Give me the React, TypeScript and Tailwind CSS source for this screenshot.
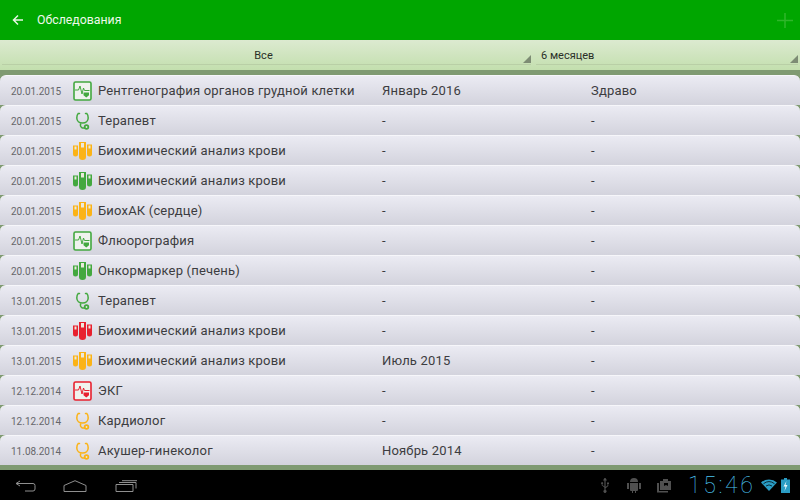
import type { ReactNode } from "react";

type Tone = "green" | "amber" | "red";
type Kind = "monitor" | "scope" | "tubes";

type Row = { date: string; kind: Kind; tone: Tone; name: string; when: string; status: string };

const rows: Row[] = [
  { date: "20.01.2015", kind: "monitor", tone: "green", name: "Рентгенография органов грудной клетки", when: "Январь 2016", status: "Здраво" },
  { date: "20.01.2015", kind: "scope", tone: "green", name: "Терапевт", when: "-", status: "-" },
  { date: "20.01.2015", kind: "tubes", tone: "amber", name: "Биохимический анализ крови", when: "-", status: "-" },
  { date: "20.01.2015", kind: "tubes", tone: "green", name: "Биохимический анализ крови", when: "-", status: "-" },
  { date: "20.01.2015", kind: "tubes", tone: "amber", name: "БиохАК (сердце)", when: "-", status: "-" },
  { date: "20.01.2015", kind: "monitor", tone: "green", name: "Флюорография", when: "-", status: "-" },
  { date: "20.01.2015", kind: "tubes", tone: "green", name: "Онкормаркер (печень)", when: "-", status: "-" },
  { date: "13.01.2015", kind: "scope", tone: "green", name: "Терапевт", when: "-", status: "-" },
  { date: "13.01.2015", kind: "tubes", tone: "red", name: "Биохимический анализ крови", when: "-", status: "-" },
  { date: "13.01.2015", kind: "tubes", tone: "amber", name: "Биохимический анализ крови", when: "Июль 2015", status: "-" },
  { date: "12.12.2014", kind: "monitor", tone: "red", name: "ЭКГ", when: "-", status: "-" },
  { date: "12.12.2014", kind: "scope", tone: "amber", name: "Кардиолог", when: "-", status: "-" },
  { date: "11.08.2014", kind: "scope", tone: "amber", name: "Акушер-гинеколог", when: "Ноябрь 2014", status: "-" },
];

const colors: Record<Tone, string> = { green: "#43a83f", amber: "#fbb316", red: "#e8202e" };

function RowIcon({ kind, tone }: { kind: Kind; tone: Tone }) {
  const c = colors[tone];
  if (kind === "monitor") {
    return (
      <svg width="19" height="20" viewBox="0 0 19 20">
        <rect x="1" y="1" width="17" height="18" rx="1.5" fill="#f0f3ee" stroke={c} strokeWidth="1.6" />
        <path d="M2 9h3.500l1.500-4 2 8 1.500-6 1 2.500h5" fill="none" stroke={c} strokeWidth="1" />
        <path d="M10.500 11.500h5.500v2.800l-2.750 2.200-2.750-2.200z" fill={c} />
      </svg>
    );
  }
  if (kind === "scope") {
    return (
      <svg width="18" height="22" viewBox="0 0 18 22">
        <path d="M6.500 3.500H5.200C4 4.700 3.800 6.500 3.800 8c0 3 2.400 5 5.700 5s5.700-2 5.700-5c0-1.500-.2-3.300-1.400-4.500H12.500" fill="none" stroke={c} strokeWidth="1.500" strokeLinecap="round" />
        <path d="M8 13.500c-1.200 1.500-.5 3.500 1 4.200 1 .4 2 .2 3 0" fill="none" stroke={c} strokeWidth="1.500" />
        <circle cx="13.500" cy="17" r="2.700" fill={c} />
        <circle cx="13.500" cy="17" r="0.900" fill="#e4e4ea" />
      </svg>
    );
  }
  return (
    <svg width="19" height="18" viewBox="0 0 19 18">
      <path d="M0 3.500h5v8.500a2.500 2.500 0 0 1-5 0z" fill={c} />
      <path d="M6 0h7v15a3.500 3 0 0 1-7 0z" fill={c} />
      <path d="M14 2.500h5v9.500a2.500 2.500 0 0 1-5 0z" fill={c} />
      <rect x="1.500" y="4.500" width="2" height="3" fill="#ece9dc" />
      <rect x="8" y="1" width="3" height="4.500" fill="#ece9dc" />
      <rect x="15.500" y="3.500" width="2" height="3" fill="#ece9dc" />
    </svg>
  );
}

function Spinner({ className, children }: { className: string; children: ReactNode }) {
  return (
    <div className={`relative flex h-[25px] items-end border-b border-[#b9cfa6] ${className}`}>
      {children}
      <span className="absolute right-0 bottom-[1px] h-0 w-0 border-b-[8px] border-l-[8px] border-b-[#7d8c74] border-l-transparent" />
    </div>
  );
}

export default function App() {
  return (
    <div className="flex h-[500px] w-[800px] flex-col overflow-hidden bg-[#7f9a72] font-['Roboto',sans-serif]">
      <header className="flex h-[40px] shrink-0 items-center justify-between bg-[#00a600] pr-[7px] pl-[12px] shadow-[0_1px_2px_rgba(0,0,0,0.45)]">
        <div className="flex items-center">
          <svg width="12" height="12" viewBox="0 0 12 12">
            <path d="M11 6H2M6 1.500 1.500 6 6 10.500" fill="none" stroke="#e8f6e4" strokeWidth="1.500" />
          </svg>
          <span className="mt-[1px] ml-[13px] text-[12.300px] text-[#eef8ea]">Обследования</span>
        </div>
        <svg width="16" height="15" viewBox="0 0 16 15">
          <path d="M8 0v15M0 7.500h16" stroke="#2fb62a" strokeWidth="1.500" />
        </svg>
      </header>

      <div className="flex h-[30px] shrink-0 items-start gap-[5px] bg-gradient-to-b from-[#dcead0] to-[#c3dfae] px-[2px] text-[11px] text-[#2a2f28]">
        <Spinner className="w-[529px]">
          <span className="w-full pr-[6px] text-center">Все</span>
        </Spinner>
        <Spinner className="flex-1">
          <span className="pl-[5px]">6 месяцев</span>
        </Spinner>
      </div>

      <div className="h-[5px] shrink-0 bg-[#7f9a72]" />

      <ul className="flex shrink-0 flex-col">
        {rows.map((r) => (
          <li
            key={r.date + r.name + r.tone}
            className="flex h-[30px] items-center rounded-t-[6px] border-t border-[#f6f6fa] bg-gradient-to-b from-[#ebebf3] to-[#d3d3dd] text-[13px] text-[#3c3c40]"
          >
            <span className="mt-[1px] w-[73px] shrink-0 pl-[11px] text-[10px] text-[#66666a]">{r.date}</span>
            <span className="flex w-[25px] shrink-0 justify-start">
              <RowIcon kind={r.kind} tone={r.tone} />
            </span>
            <span className="w-[284px] shrink-0 tracking-[0.18px]">{r.name}</span>
            <span className="w-[209px] shrink-0 tracking-[0.18px]">{r.when}</span>
            <span className="tracking-[0.18px]">{r.status}</span>
          </li>
        ))}
      </ul>

      <div className="h-[5px] shrink-0 bg-[#7f9a72]" />

      <footer className="flex h-[30px] shrink-0 items-center justify-between bg-black pr-[10px] pl-[15px]">
        <div className="flex items-center pt-[1px]">
          <svg width="21" height="12" viewBox="0 0 21 12" fill="none" stroke="#8f8f8f" strokeWidth="1">
            <path d="M5 1 1 3.500 5 6M1 3.500h17a2 2 0 0 1 2 2V9a2 2 0 0 1-2 2H10" />
          </svg>
          <svg className="ml-[27px]" width="24" height="12" viewBox="0 0 24 12" fill="none" stroke="#8f8f8f" strokeWidth="1">
            <path d="M1 5.500 12 .700 23 5.500V11.500H1z" />
          </svg>
          <svg className="ml-[28px]" width="23" height="12" viewBox="0 0 23 12" fill="none" stroke="#8f8f8f" strokeWidth="1">
            <path d="M1 4.500h17v7H1zM4 2.500h17v6M7 .700h15" />
          </svg>
        </div>
        <div className="flex items-center">
          <svg width="10" height="15" viewBox="0 0 10 15" fill="#505050">
            <path d="M4.500 0h1l1.500 2.500H5.600V9l1.900-1.500V6H7V4.500h2V6h-.7v2L5.600 10.200V12a1.500 1.500 0 1 1-1.200 0V9.500L1.700 7.300V6a1 1 0 1 1 .8 0v1l1.900 1.500V2.500H3z" />
          </svg>
          <svg className="ml-[17px]" width="14" height="16" viewBox="0 0 14 16" fill="#505050">
            <path d="M3 5a4 4 0 0 1 8 0zM3 6h8v7a1 1 0 0 1-1 1H9v2H8v-2H6v2H5v-2H4a1 1 0 0 1-1-1zM0 6h2v6H0zM12 6h2v6h-2z" />
          </svg>
          <svg className="ml-[16px]" width="15" height="15" viewBox="0 0 15 15" fill="#505050">
            <path d="M3 3h3V1h5v2h3v9H3zM0 5h2v8h9v1.500H0z" />
            <path d="M7 5h4v3l-2-1-2 1z" fill="#000" />
          </svg>
          <span className="ml-[16px] w-[73px] text-[23px] leading-none font-thin tracking-[2.6px] text-[#4cc4f0]">15:46</span>
          <svg width="16" height="12" viewBox="0 0 16 12">
            <path d="M0 3.500a12 12 0 0 1 16 0L8 12z" fill="#2a9cc4" />
            <path d="M2.500 4.700a9 9 0 0 1 11 0" fill="none" stroke="#0a2c38" strokeWidth="1" />
            <path d="M5 7a5 5 0 0 1 6 0" fill="none" stroke="#0a2c38" strokeWidth="1" />
          </svg>
          <svg className="ml-[4px]" width="9" height="15" viewBox="0 0 9 15">
            <path d="M3 0h3v1.500h3V15H0V1.500h3z" fill="#2a9cc4" />
            <path d="M5.500 3 2.500 8.500H4.500l-1 4.500 3-6H4.500z" fill="#e6f7fc" />
          </svg>
        </div>
      </footer>
    </div>
  );
}
